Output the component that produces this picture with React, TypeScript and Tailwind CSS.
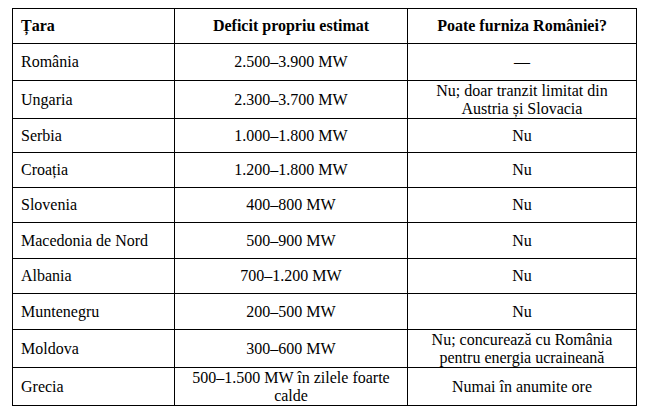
const ROWS: { tara: string; deficit: React.ReactNode; furniza: React.ReactNode; h: string }[] = [
  { tara: "România", deficit: "2.500–3.900 MW", furniza: "—", h: "h-[37px]" },
  { tara: "Ungaria", deficit: "2.300–3.700 MW", furniza: <>Nu; doar tranzit limitat din<br />Austria și Slovacia</>, h: "h-[38px]" },
  { tara: "Serbia", deficit: "1.000–1.800 MW", furniza: "Nu", h: "h-[34px]" },
  { tara: "Croația", deficit: "1.200–1.800 MW", furniza: "Nu", h: "h-[35px]" },
  { tara: "Slovenia", deficit: "400–800 MW", furniza: "Nu", h: "h-[35px]" },
  { tara: "Macedonia de Nord", deficit: "500–900 MW", furniza: "Nu", h: "h-[36px]" },
  { tara: "Albania", deficit: "700–1.200 MW", furniza: "Nu", h: "h-[35px]" },
  { tara: "Muntenegru", deficit: "200–500 MW", furniza: "Nu", h: "h-[36px]" },
  { tara: "Moldova", deficit: "300–600 MW", furniza: <>Nu; concurează cu România<br />pentru energia ucraineană</>, h: "h-[38px]" },
  { tara: "Grecia", deficit: <>500–1.500 MW în zilele foarte<br />calde</>, furniza: "Numai în anumite ore", h: "h-[38px]" },
];

// Word-style table: outer top/left border on the grid, each cell draws its own right/bottom edge.
export default function App() {
  return (
    <div className="min-h-[407px] w-[647px] bg-white pl-[12px] pt-[8px] text-black font-['Liberation_Serif'] text-[16px] leading-[18px]">
      <div className="grid w-[625px] grid-cols-[162px_233px_229px] border-l border-t border-black">
        <div className="flex h-[35px] items-center border-b border-r border-black px-[8px] font-bold">Țara</div>
        <div className="flex h-[35px] items-center justify-center border-b border-r border-black px-[6px] text-center font-bold">Deficit propriu estimat</div>
        <div className="flex h-[35px] items-center justify-center border-b border-r border-black px-[6px] text-center font-bold">Poate furniza României?</div>
        {ROWS.map((r) => (
          <div key={r.tara} className="contents">
            <div className={`flex ${r.h} items-center border-b border-r border-black px-[8px]`}>{r.tara}</div>
            <div className={`flex ${r.h} items-center justify-center border-b border-r border-black px-[6px] text-center`}>
              <span>{r.deficit}</span>
            </div>
            <div className={`flex ${r.h} items-center justify-center border-b border-r border-black px-[6px] text-center`}>
              <span>{r.furniza}</span>
            </div>
          </div>
        ))}
      </div>
    </div>
  );
}
